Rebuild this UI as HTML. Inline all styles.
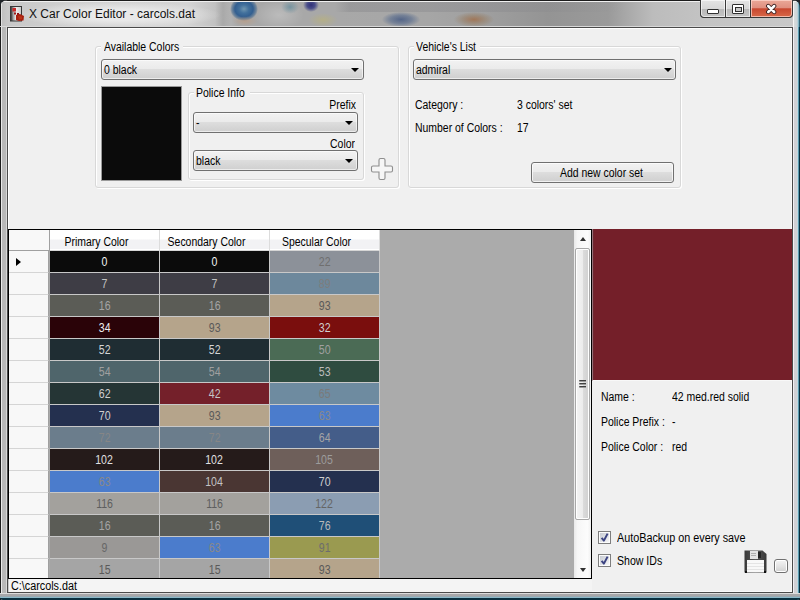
<!DOCTYPE html>
<html><head><meta charset="utf-8">
<style>
*{box-sizing:border-box;margin:0;padding:0}
html,body{width:800px;height:600px;overflow:hidden;background:#202428}
body{position:relative;font-family:"Liberation Sans",sans-serif;font-size:12px;line-height:14px;color:#000}
.a{position:absolute}
.t{position:absolute;white-space:nowrap;transform-origin:0 0;transform:scaleX(0.87)}
.tr{position:absolute;white-space:nowrap;transform-origin:100% 0;transform:scaleX(0.87);text-align:right}
.tc{position:absolute;white-space:nowrap;transform-origin:50% 0;transform:scaleX(0.87);text-align:center}
.gb{position:absolute;border:1px solid #d8d8d8;border-radius:3px;box-shadow:inset 1px 1px 0 #fff,1px 1px 0 #fff}
.combo{position:absolute;border:1px solid #707070;border-radius:3px;background:linear-gradient(#f2f2f2 0,#ebebeb 45%,#dddddd 50%,#cfcfcf 100%);box-shadow:inset 0 0 0 1px rgba(255,255,255,.6)}
.arr{position:absolute;width:0;height:0;border-left:4px solid transparent;border-right:4px solid transparent;border-top:4px solid #000}
.row{position:absolute;left:50px;width:330px;height:22px}
.c{position:absolute;top:0;height:21px;width:109px;text-align:center;line-height:21px}
.hd{position:absolute;width:110px;height:21px;background:linear-gradient(#ffffff 0,#ffffff 45%,#f2f2f4 50%,#f2f2f4 100%);border-right:1px solid #dcdcdc;border-bottom:1px solid #d5d5d5;box-shadow:inset 0 -1px 0 #fff}
.cell{width:109px;height:21px;text-align:center;line-height:21px;padding-top:1px}
.cell span{display:inline-block;transform:scaleX(0.88)}
.chk{width:13px;height:13px;border:1px solid #8e8f8f;background:linear-gradient(135deg,#dcdcdc,#f8f8f8);box-shadow:inset 0 0 0 1px #f4f4f4}
.chk::after{content:"";position:absolute;left:2px;top:1px;width:7px;height:7px;border:solid #3a4a9a;border-width:0 0 2px 2px;transform:rotate(-50deg) skewX(-10deg);}
.rh{position:absolute;left:9px;width:40px;height:22px;background:#f8f8f8;border-bottom:1px solid #d5d5d5;border-right:1px solid #a0a0a0}
</style></head><body>
<!-- window frame -->
<div class="a" style="left:0;top:0;width:800px;height:600px;border-radius:8px 8px 3px 3px;overflow:hidden;background:linear-gradient(90deg,#1c1c1c 0,#1c1c1c 1px,#e8e8e8 1px,#e8e8e8 2px,#b8b8b8 2px,#b8b8b8 6px,#d8d8d8 6px,#d8d8d8 7px,#404040 7px,#404040 8px,#c8c8c8 8px,#c8c8c8 793px,#f0f0f4 793px,#f0f0f4 794px,#d0d0d4 794px,#d0d0d4 797px,#c0d8e0 797px,#c0d8e0 798px,#5a9ab0 798px,#5a9ab0 799px,#0a3040 799px)">
  <div class="a" style="left:0;top:593px;width:800px;height:7px;background:linear-gradient(#dcdcdc 0,#dcdcdc 1px,#a8a8aa 1px,#a8a8aa 3px,#9aa8b0 3px,#9aa8b0 4px,#8ab8c8 4px,#8ab8c8 5px,#0a3040 5px)"></div>
  <div class="a" style="left:0;top:0;width:800px;height:27px;background:linear-gradient(#1c1c1c 0,#1c1c1c 1px,#f0f0f0 1px,#f0f0f0 2px,transparent 2px,transparent 26px,#d8d8d8 26px)"></div>
  <div class="a" style="left:8px;top:2px;width:785px;height:24px;background:linear-gradient(90deg,#c8c8c8 0,#d0d0d0 60px,#d4d4d4 180px,#bcbcbc 215px,#a8a8a8 230px,#a8a8a8 330px,#a6a6a6 420px,#a0a0a0 470px,#949494 540px,#9a9a9a 600px,#bcbcbc 645px,#c4c4c4 700px,#c8c8c8 785px)"></div>
  <div class="a" style="left:1px;top:2px;width:7px;height:24px;background:linear-gradient(90deg,#e0e0e0 0,#e0e0e0 1px,#c0c0c0 1px,#c8c8c8)"></div>
  <div class="a" style="left:793px;top:2px;width:7px;height:25px;background:linear-gradient(90deg,#f4f4f4 0,#f4f4f4 1px,#d8dcdc 1px,#ccd4d8 4px,#a8ccd8 5px,#5a9ab0 6px,#0a3040 7px)"></div>
</div>
<!-- title blobs -->
<div class="a" style="left:2px;top:2px;width:791px;height:24px;overflow:hidden">
<div class="a" style="left:213px;top:0;width:16px;height:24px;background:linear-gradient(90deg,rgba(150,150,150,0),rgba(150,150,150,.5) 50%,rgba(150,150,150,0))"></div>
<div class="a" style="left:252px;top:-2px;width:50px;height:30px;border-radius:50%;background:radial-gradient(rgba(200,200,200,.6),rgba(200,200,200,0) 70%)"></div>
<div class="a" style="left:228px;top:-5px;width:28px;height:24px;border-radius:50%;background:radial-gradient(closest-side,#7096b0 0,#42709c 35%,#335f90 65%,rgba(60,100,140,.5) 88%,rgba(160,170,180,0) 100%)"></div>
<div class="a" style="left:230px;top:14px;width:26px;height:10px;border-radius:50%;background:radial-gradient(rgba(200,150,110,.45),rgba(180,160,140,0) 70%)"></div>
<div class="a" style="left:301px;top:-4px;width:16px;height:14px;border-radius:50%;background:radial-gradient(closest-side,#303078 0,rgba(50,55,130,.8) 50%,rgba(150,150,170,0) 100%)"></div>
<div class="a" style="left:279px;top:-2px;width:18px;height:14px;border-radius:50%;background:radial-gradient(rgba(80,130,150,.6) 0,rgba(150,160,170,0) 70%)"></div>
<div class="a" style="left:306px;top:11px;width:30px;height:14px;border-radius:50%;background:radial-gradient(rgba(190,180,110,.55) 0,rgba(170,170,160,0) 70%)"></div>
<div class="a" style="left:333px;top:0;width:290px;height:10px;background:linear-gradient(90deg,rgba(120,120,125,0),rgba(120,120,125,.3) 5%,rgba(130,130,135,.3) 60%,rgba(130,130,135,0))"></div>
<div class="a" style="left:380px;top:10px;width:38px;height:15px;border-radius:50%;background:radial-gradient(rgba(70,90,130,.85) 0,rgba(85,105,140,.6) 40%,rgba(160,160,160,0) 72%)"></div>
<div class="a" style="left:452px;top:10px;width:40px;height:15px;border-radius:50%;background:radial-gradient(rgba(160,105,65,.75) 0,rgba(150,120,90,.45) 40%,rgba(160,160,160,0) 72%)"></div>
<div class="a" style="left:18px;top:0;width:200px;height:26px;border-radius:50%;background:radial-gradient(ellipse,rgba(235,235,235,.9) 30%,rgba(230,230,230,0) 72%)"></div>
</div>
<!-- icon -->
<svg class="a" style="left:10px;top:6px" width="16" height="16" viewBox="0 0 16 16">
<defs><linearGradient id="ig" x1="0" x2="1"><stop offset="0" stop-color="#202020"/><stop offset=".25" stop-color="#a0a0a0"/><stop offset=".5" stop-color="#f0f0f0"/><stop offset="1" stop-color="#c8c8c8"/></linearGradient></defs>
<rect x="0.5" y="0.5" width="11" height="14.5" fill="url(#ig)" stroke="#383838"/>
<rect x="2.5" y="2" width="3.5" height="3.5" fill="#c82828"/>
<rect x="4" y="6.5" width="2" height="2" fill="#a01818"/>
<rect x="7" y="7" width="2" height="2" fill="#901010"/>
<path d="M6 9 L10 8 L14 10 L13.5 14.5 L9 15 L6 14z" fill="#a82010"/>
<path d="M8 10 L12 10.5 L12 13 L9 13.5z" fill="#b83418"/>
</svg>
<div class="a" style="left:29px;top:7px;white-space:nowrap;color:#101010">X Car Color Editor - carcols.dat</div>
<!-- title buttons -->
<div class="a" style="left:700px;top:0;width:93px;height:18px;border:1px solid #383838;border-top:0;border-radius:0 0 4px 4px;overflow:hidden;background:#383838">
 <div class="a" style="left:0;top:0;width:24px;height:17px;background:linear-gradient(#e4e4e4 0,#d8d8d8 50%,#b8b8b8 52%,#c4c4c4);box-shadow:inset 0 0 0 1px rgba(255,255,255,.6);border-radius:0 0 0 3px"></div>
 <div class="a" style="left:25px;top:0;width:24px;height:17px;background:linear-gradient(#e4e4e4 0,#d8d8d8 50%,#b8b8b8 52%,#c4c4c4);box-shadow:inset 0 0 0 1px rgba(255,255,255,.6)"></div>
 <div class="a" style="left:50px;top:0;width:41px;height:17px;background:linear-gradient(#eaa898 0,#e09080 45%,#c84830 52%,#d86848);box-shadow:inset 0 0 0 1px rgba(255,220,210,.7);border-radius:0 0 3px 0"></div>
</div>
<div class="a" style="left:707px;top:9px;width:12px;height:5px;background:#fff;border:1px solid #303030;border-radius:1px"></div>
<div class="a" style="left:732px;top:4px;width:12px;height:10px;background:#fff;border:1px solid #303030;border-radius:1px"></div>
<div class="a" style="left:735px;top:7px;width:7px;height:5px;background:#c8c8c8;border:1px solid #303030"></div>
<svg class="a" style="left:765px;top:3px" width="13" height="12" viewBox="0 0 13 12"><path d="M3.2 3 L9.2 9 M9.2 3 L3.2 9" stroke="#3a2020" stroke-width="4.3" stroke-linecap="round"/><path d="M3.2 3 L9.2 9 M9.2 3 L3.2 9" stroke="#fff" stroke-width="2.5" stroke-linecap="round"/></svg>

<!-- client -->
<div class="a" style="left:7px;top:27px;width:786px;height:566px;background:#f0f0f0;border:1px solid #4a4a4a;box-shadow:inset 1px 1px 0 #fff,inset -1px -1px 0 #fafafa"></div>

<!-- Available Colors group -->
<div class="gb" style="left:95px;top:46px;width:304px;height:142px"></div>
<div class="a" style="left:101px;top:40px;width:82px;height:14px;background:#f0f0f0"></div>
<div class="t" style="left:104px;top:40px">Available Colors</div>
<div class="combo" style="left:101px;top:59px;width:263px;height:21px"></div>
<div class="t" style="left:104px;top:63px">0 black</div>
<div class="arr" style="left:351px;top:68px"></div>
<div class="a" style="left:101px;top:86px;width:81px;height:95px;background:#0b0b0b;border:1px solid #9a9a9a"></div>
<!-- police info group -->
<div class="gb" style="left:188px;top:92px;width:176px;height:88px"></div>
<div class="a" style="left:194px;top:86px;width:56px;height:14px;background:#f0f0f0"></div>
<div class="t" style="left:196px;top:86px">Police Info</div>
<div class="tr" style="left:256px;top:98px;width:100px">Prefix</div>
<div class="combo" style="left:193px;top:112px;width:165px;height:21px"></div>
<div class="t" style="left:196px;top:116px">-</div>
<div class="arr" style="left:345px;top:121px"></div>
<div class="tr" style="left:255px;top:137px;width:100px">Color</div>
<div class="combo" style="left:193px;top:150px;width:165px;height:21px"></div>
<div class="t" style="left:196px;top:154px">black</div>
<div class="arr" style="left:345px;top:159px"></div>
<!-- plus icon -->
<svg class="a" style="left:370px;top:157px" width="25" height="25" viewBox="0 0 25 25">
<path d="M10.5 1.5 h3 a1.5 1.5 0 0 1 1.5 1.5 v6 h6 a1.5 1.5 0 0 1 1.5 1.5 v3 a1.5 1.5 0 0 1 -1.5 1.5 h-6 v6 a1.5 1.5 0 0 1 -1.5 1.5 h-3 a1.5 1.5 0 0 1 -1.5 -1.5 v-6 h-6 a1.5 1.5 0 0 1 -1.5 -1.5 v-3 a1.5 1.5 0 0 1 1.5 -1.5 h6 v-6 a1.5 1.5 0 0 1 1.5 -1.5z" fill="#f6f6f6" stroke="#8e8e8e" stroke-width="1.1"/>
</svg>

<!-- Vehicle's List group -->
<div class="gb" style="left:408px;top:46px;width:273px;height:142px"></div>
<div class="a" style="left:414px;top:40px;width:66px;height:14px;background:#f0f0f0"></div>
<div class="t" style="left:416px;top:40px">Vehicle's List</div>
<div class="combo" style="left:413px;top:59px;width:263px;height:21px"></div>
<div class="t" style="left:416px;top:63px">admiral</div>
<div class="arr" style="left:664px;top:68px"></div>
<div class="t" style="left:415px;top:98px">Category :</div>
<div class="t" style="left:517px;top:98px">3 colors' set</div>
<div class="t" style="left:415px;top:121px">Number of Colors :</div>
<div class="t" style="left:517px;top:121px">17</div>
<div class="a" style="left:531px;top:162px;width:143px;height:21px;border:1px solid #707070;border-radius:3px;background:linear-gradient(#f2f2f2 0,#ebebeb 45%,#dddddd 50%,#cfcfcf 100%);box-shadow:inset 0 0 0 1px rgba(255,255,255,.7)"></div>
<div class="tc" style="left:530px;top:166px;width:143px">Add new color set</div>

<!-- data grid -->
<div class="a" style="left:8px;top:229px;width:584px;height:350px;background:#ababab"></div>
<div class="a" style="left:9px;top:230px;width:41px;height:21px;background:#f8f8f8;border-right:1px solid #a0a0a0;border-bottom:1px solid #a0a0a0"></div>
<div class="a hd" style="left:50px;top:230px"></div>
<div class="tc" style="left:50px;top:235px;width:93px">Primary Color</div>
<div class="a hd" style="left:160px;top:230px"></div>
<div class="tc" style="left:160px;top:235px;width:93px">Secondary Color</div>
<div class="a hd" style="left:270px;top:230px"></div>
<div class="tc" style="left:270px;top:235px;width:93px">Specular Color</div>
<div class="a" style="left:50px;top:251px;width:330px;height:327px;background:#c8c8c8"></div>
<div class="rh" style="top:251px"></div>
<div class="a cell" style="left:50px;top:251px;height:21px;background:#0b0b0b;color:#f4f4f4"><span>0</span></div>
<div class="a cell" style="left:160px;top:251px;height:21px;background:#0b0b0b;color:#f4f4f4"><span>0</span></div>
<div class="a cell" style="left:270px;top:251px;height:21px;background:#8c9199;color:#6f6f6f"><span>22</span></div>
<div class="rh" style="top:273px"></div>
<div class="a cell" style="left:50px;top:273px;height:21px;background:#3e3d45;color:#c1c1c1"><span>7</span></div>
<div class="a cell" style="left:160px;top:273px;height:21px;background:#3e3d45;color:#c1c1c1"><span>7</span></div>
<div class="a cell" style="left:270px;top:273px;height:21px;background:#6d889c;color:#7d7d7d"><span>89</span></div>
<div class="rh" style="top:295px"></div>
<div class="a cell" style="left:50px;top:295px;height:21px;background:#5b5c56;color:#a4a4a4"><span>16</span></div>
<div class="a cell" style="left:160px;top:295px;height:21px;background:#5b5c56;color:#a4a4a4"><span>16</span></div>
<div class="a cell" style="left:270px;top:295px;height:21px;background:#b5a48b;color:#595959"><span>93</span></div>
<div class="rh" style="top:317px"></div>
<div class="a cell" style="left:50px;top:317px;height:21px;background:#2a0308;color:#f0f0f0"><span>34</span></div>
<div class="a cell" style="left:160px;top:317px;height:21px;background:#b5a48b;color:#595959"><span>93</span></div>
<div class="a cell" style="left:270px;top:317px;height:21px;background:#7a0e0d;color:#d1d1d1"><span>32</span></div>
<div class="rh" style="top:339px"></div>
<div class="a cell" style="left:50px;top:339px;height:21px;background:#1f2d33;color:#d6d6d6"><span>52</span></div>
<div class="a cell" style="left:160px;top:339px;height:21px;background:#1f2d33;color:#d6d6d6"><span>52</span></div>
<div class="a cell" style="left:270px;top:339px;height:21px;background:#4b6b55;color:#a0a0a0"><span>50</span></div>
<div class="rh" style="top:361px"></div>
<div class="a cell" style="left:50px;top:361px;height:21px;background:#4f656b;color:#a0a0a0"><span>54</span></div>
<div class="a cell" style="left:160px;top:361px;height:21px;background:#4f656b;color:#a0a0a0"><span>54</span></div>
<div class="a cell" style="left:270px;top:361px;height:21px;background:#2f4c40;color:#bdbdbd"><span>53</span></div>
<div class="rh" style="top:383px"></div>
<div class="a cell" style="left:50px;top:383px;height:21px;background:#253535;color:#cfcfcf"><span>62</span></div>
<div class="a cell" style="left:160px;top:383px;height:21px;background:#74202a;color:#c5c5c5"><span>42</span></div>
<div class="a cell" style="left:270px;top:383px;height:21px;background:#6e8ba0;color:#7a7a7a"><span>65</span></div>
<div class="rh" style="top:405px"></div>
<div class="a cell" style="left:50px;top:405px;height:21px;background:#24304f;color:#cfcfcf"><span>70</span></div>
<div class="a cell" style="left:160px;top:405px;height:21px;background:#b5a48b;color:#595959"><span>93</span></div>
<div class="a cell" style="left:270px;top:405px;height:21px;background:#4b7ccc;color:#898989"><span>63</span></div>
<div class="rh" style="top:427px"></div>
<div class="a cell" style="left:50px;top:427px;height:21px;background:#6b7d8c;color:#868686"><span>72</span></div>
<div class="a cell" style="left:160px;top:427px;height:21px;background:#6b7d8c;color:#868686"><span>72</span></div>
<div class="a cell" style="left:270px;top:427px;height:21px;background:#445d89;color:#a4a4a4"><span>64</span></div>
<div class="rh" style="top:449px"></div>
<div class="a cell" style="left:50px;top:449px;height:21px;background:#251b1a;color:#e1e1e1"><span>102</span></div>
<div class="a cell" style="left:160px;top:449px;height:21px;background:#251b1a;color:#e1e1e1"><span>102</span></div>
<div class="a cell" style="left:270px;top:449px;height:21px;background:#6e5f5a;color:#9c9c9c"><span>105</span></div>
<div class="rh" style="top:471px"></div>
<div class="a cell" style="left:50px;top:471px;height:21px;background:#4b7ccc;color:#898989"><span>63</span></div>
<div class="a cell" style="left:160px;top:471px;height:21px;background:#4a3633;color:#c3c3c3"><span>104</span></div>
<div class="a cell" style="left:270px;top:471px;height:21px;background:#24304f;color:#cfcfcf"><span>70</span></div>
<div class="rh" style="top:493px"></div>
<div class="a cell" style="left:50px;top:493px;height:21px;background:#a3a19d;color:#5e5e5e"><span>116</span></div>
<div class="a cell" style="left:160px;top:493px;height:21px;background:#a3a19d;color:#5e5e5e"><span>116</span></div>
<div class="a cell" style="left:270px;top:493px;height:21px;background:#8b9db2;color:#656565"><span>122</span></div>
<div class="rh" style="top:515px"></div>
<div class="a cell" style="left:50px;top:515px;height:21px;background:#5b5c56;color:#a4a4a4"><span>16</span></div>
<div class="a cell" style="left:160px;top:515px;height:21px;background:#5b5c56;color:#a4a4a4"><span>16</span></div>
<div class="a cell" style="left:270px;top:515px;height:21px;background:#1f4f77;color:#bababa"><span>76</span></div>
<div class="rh" style="top:537px"></div>
<div class="a cell" style="left:50px;top:537px;height:21px;background:#9a9896;color:#676767"><span>9</span></div>
<div class="a cell" style="left:160px;top:537px;height:21px;background:#4b7ccc;color:#898989"><span>63</span></div>
<div class="a cell" style="left:270px;top:537px;height:21px;background:#9a9a50;color:#6d6d6d"><span>91</span></div>
<div class="rh" style="top:559px"></div>
<div class="a cell" style="left:50px;top:559px;height:19px;background:#a5a5a5;color:#5a5a5a"><span>15</span></div>
<div class="a cell" style="left:160px;top:559px;height:19px;background:#a5a5a5;color:#5a5a5a"><span>15</span></div>
<div class="a cell" style="left:270px;top:559px;height:19px;background:#b5a48b;color:#595959"><span>93</span></div>
<div class="a" style="left:16px;top:258px;width:0;height:0;border-top:4.5px solid transparent;border-bottom:4.5px solid transparent;border-left:5px solid #000"></div>
<div class="a" style="left:574px;top:230px;width:17px;height:348px;background:linear-gradient(90deg,#e8e8e8,#f6f6f6 20%,#fcfcfc 80%,#f0f0f0)"></div>
<div class="a" style="left:580px;top:237px;width:0;height:0;border-left:3.5px solid transparent;border-right:3.5px solid transparent;border-bottom:4px solid #303030"></div>
<div class="a" style="left:580px;top:568px;width:0;height:0;border-left:3.5px solid transparent;border-right:3.5px solid transparent;border-top:4px solid #303030"></div>
<div class="a" style="left:575px;top:248px;width:15px;height:272px;border:1px solid #a8a8a8;border-radius:2px;background:linear-gradient(90deg,#f4f4f4,#ececec 50%,#dcdcdc 51%,#d0d0d0);box-shadow:inset 0 0 0 1px #fff"></div>
<div class="a" style="left:579px;top:380px;width:7px;height:2px;background:linear-gradient(#404040 50%,#9a9a9a 50%);border-radius:1px 0 0 1px"></div>
<div class="a" style="left:579px;top:383px;width:7px;height:2px;background:linear-gradient(#404040 50%,#9a9a9a 50%);border-radius:1px 0 0 1px"></div>
<div class="a" style="left:579px;top:386px;width:7px;height:2px;background:linear-gradient(#404040 50%,#9a9a9a 50%);border-radius:1px 0 0 1px"></div>
<div class="a" style="left:8px;top:229px;width:584px;height:350px;border:1px solid #000"></div>
<!-- right panel -->
<div class="a" style="left:592px;top:229px;width:200px;height:152px;background:#741f29;border-left:1px solid #987078;border-bottom:1px solid #f8f8f8;box-shadow:inset 1px 0 0 #6a2830"></div>
<div class="t" style="left:601px;top:390px">Name :</div>
<div class="t" style="left:672px;top:390px">42 med.red solid</div>
<div class="t" style="left:601px;top:415px">Police Prefix :</div>
<div class="t" style="left:672px;top:415px">-</div>
<div class="t" style="left:601px;top:440px">Police Color :</div>
<div class="t" style="left:672px;top:440px">red</div>
<!-- checkboxes -->
<svg class="a" style="left:598px;top:531px" width="13" height="13" viewBox="0 0 13 13"><defs><linearGradient id="cg" x1="0" y1="0" x2="1" y2="1"><stop offset="0" stop-color="#c8ccd4"/><stop offset="1" stop-color="#f6f6f6"/></linearGradient></defs><rect x="0.5" y="0.5" width="12" height="12" fill="#fcfcfc" stroke="#7e7e7e"/><rect x="2" y="2" width="9" height="9" fill="url(#cg)"/><path d="M3.6 6.8 L5.9 9.6 L9.6 2.6" stroke="#3c4482" stroke-width="2" fill="none" stroke-linejoin="round"/></svg>
<svg class="a" style="left:598px;top:554px" width="13" height="13" viewBox="0 0 13 13"><rect x="0.5" y="0.5" width="12" height="12" fill="#fcfcfc" stroke="#7e7e7e"/><rect x="2" y="2" width="9" height="9" fill="url(#cg)"/><path d="M3.6 6.8 L5.9 9.6 L9.6 2.6" stroke="#3c4482" stroke-width="2" fill="none" stroke-linejoin="round"/></svg>
<div class="t" style="left:617px;top:531px;transform:scaleX(0.9)">AutoBackup on every save</div>
<div class="t" style="left:617px;top:554px;transform:scaleX(0.88)">Show IDs</div>
<!-- floppy -->
<svg class="a" style="left:744px;top:550px" width="23" height="23" viewBox="0 0 23 23">
<defs><linearGradient id="fg" x1="0" y1="0" x2="1" y2="0"><stop offset="0" stop-color="#383838"/><stop offset="0.5" stop-color="#5a5a5a"/><stop offset="1" stop-color="#383838"/></linearGradient></defs>
<path d="M0.5 0.5 H18.5 L22.5 4 V22.5 H0.5 Z" fill="url(#fg)"/>
<rect x="6" y="1" width="8" height="8" fill="#e4e4e4"/>
<path d="M7 3.5h5M7 5.5h5" stroke="#b0b0b0" stroke-width="1"/>
<rect x="14" y="2" width="3" height="6" fill="#252525"/>
<rect x="3" y="10" width="17" height="12" fill="#f8f8f8"/>
<path d="M3 13.5h17M3 16.5h17M3 19.5h17" stroke="#e4e4e4" stroke-width="1"/>
<rect x="1" y="21" width="2" height="2" fill="#101010"/><rect x="20" y="21" width="2" height="2" fill="#101010"/>
</svg>
<div class="a" style="left:774px;top:559px;width:14px;height:14px;border:1px solid #707070;border-radius:3px;background:linear-gradient(#f4f4f4,#e4e4e4 50%,#d0d0d0);box-shadow:inset 0 0 0 1px #fff"></div>
<!-- status bar -->
<div class="a" style="left:8px;top:579px;width:584px;height:13px;background:#f4f4f4;border-left:1px solid #c8c8c8"></div>
<div class="t" style="left:11px;top:579px;transform:scaleX(0.9)">C:\carcols.dat</div>

</body></html>
